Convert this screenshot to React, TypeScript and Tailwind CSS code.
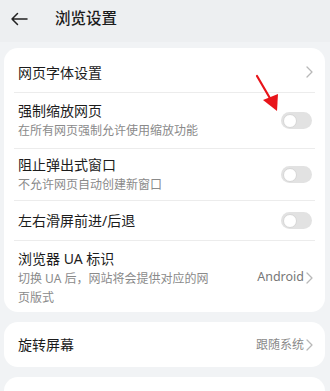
import React from "react";

const font = { fontFamily: '"Noto Sans", "Noto Sans CJK SC", Roboto, sans-serif' };

const Chevron = () => (
  <svg width="7" height="12" viewBox="0 0 7 12" className="ml-[2px]">
    <path d="M1 1l5 5-5 5" fill="none" stroke="#b8b8b8" strokeWidth="1.3" strokeLinecap="round" strokeLinejoin="round" />
  </svg>
);

const Toggle = () => (
  <div className="w-[31px] h-[17px] rounded-full bg-[#e2e2e2] flex items-center px-[1.5px]">
    <div className="w-[14px] h-[14px] rounded-full bg-white border border-[#d6d6d6]" />
  </div>
);

const Divider = () => <div className="mx-[10px] h-px bg-[#ececec]" />;

export default function App() {
  return (
    <div className="w-[330px] h-[391px] overflow-hidden bg-[#f1f3f5] relative" style={font}>
      {/* header */}
      <div className="h-[42px] bg-[#edeff1] flex items-center pb-[5px]">
        <svg width="18" height="14" viewBox="0 0 18 14" className="ml-[10px]">
          <path d="M17 7H2M7.5 1.5L2 7l5.5 5.5" fill="none" stroke="#222" strokeWidth="1.5" strokeLinecap="round" strokeLinejoin="round" />
        </svg>
        <span className="ml-[27px] text-[15.5px] text-[#1c1c1c] font-medium">浏览设置</span>
      </div>

      <div className="pt-[6px] pl-[4px] pr-[5px] flex flex-col gap-[10px]">
        <div className="bg-white rounded-[14px] pt-[4px]">
          <div className="h-[40px] flex items-center justify-between pl-[14px] pr-[12px]">
            <span className="text-[14px] text-[#1c1c1c]">网页字体设置</span>
            <Chevron />
          </div>
          <Divider />
          <div className="h-[55px] flex items-center justify-between pl-[14px] pr-[13px]">
            <div className="flex flex-col leading-[20px]">
              <span className="text-[14px] text-[#1c1c1c]">强制缩放网页</span>
              <span className="text-[12px] text-[#8a8a8a]">在所有网页强制允许使用缩放功能</span>
            </div>
            <Toggle />
          </div>
          <Divider />
          <div className="h-[51px] flex items-center justify-between pl-[14px] pr-[13px]">
            <div className="flex flex-col leading-[20px]">
              <span className="text-[14px] text-[#1c1c1c]">阻止弹出式窗口</span>
              <span className="text-[12px] text-[#8a8a8a]">不允许网页自动创建新窗口</span>
            </div>
            <Toggle />
          </div>
          <Divider />
          <div className="h-[39px] flex items-center justify-between pl-[14px] pr-[13px]">
            <span className="text-[14px] text-[#1c1c1c]">左右滑屏前进/后退</span>
            <Toggle />
          </div>
          <Divider />
          <div className="flex items-center justify-between pl-[14px] pr-[12px] pt-[7px] pb-[5px]">
            <div className="flex flex-col w-[200px]">
              <span className="text-[14px] text-[#1c1c1c] leading-[21px]">浏览器 UA 标识</span>
              <span className="text-[12px] text-[#8a8a8a] leading-[19px]">切换 UA 后，网站将会提供对应的网页版式</span>
            </div>
            <div className="flex items-center">
              <span className="text-[12.5px] text-[#777]">Android</span>
              <Chevron />
            </div>
          </div>
        </div>

        <div className="bg-white rounded-[14px] h-[45px] flex items-center justify-between pl-[14px] pr-[12px]">
          <span className="text-[14px] text-[#1c1c1c]">旋转屏幕</span>
          <div className="flex items-center">
            <span className="text-[12px] text-[#8a8a8a]">跟随系统</span>
            <Chevron />
          </div>
        </div>

        <div className="bg-white rounded-[14px] h-[45px]" />
      </div>

      {/* red annotation arrow */}
      <svg className="absolute left-[250px] top-[70px]" width="40" height="50" viewBox="0 0 40 50">
        <path d="M7 6L21 30" stroke="#e8141a" strokeWidth="2.2" strokeLinecap="round" />
        <path d="M13 30L28 24L27 41Z" fill="#e8141a" />
      </svg>
    </div>
  );
}
